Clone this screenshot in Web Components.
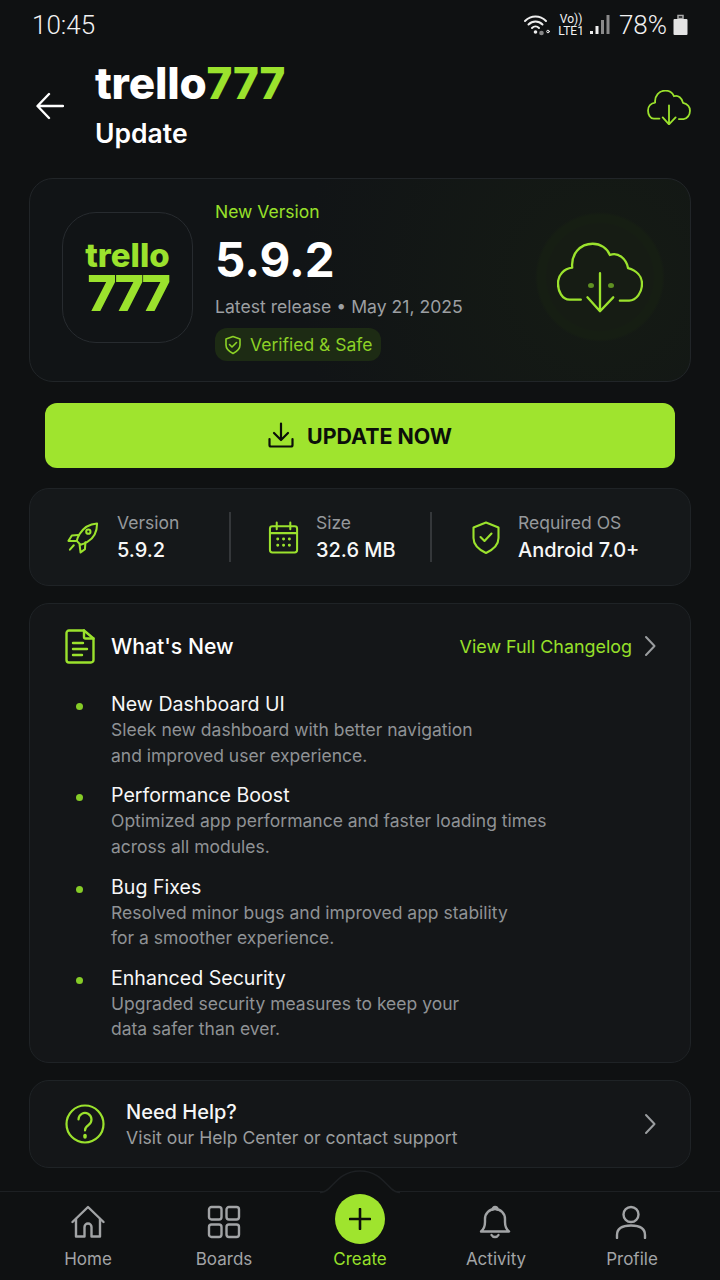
<!doctype html>
<html lang="en">
<head>
<meta charset="UTF-8">
<title>trello777 Update</title>
<style>
    html, body { margin: 0; background: #0f1112; }
    body {
        width: 720px; height: 1280px; overflow: hidden;
        display: flex; flex-direction: column;
        font-family: Inter, "Liberation Sans", sans-serif; color: #fff;
    }
    main { flex: 1; padding: 0 29px; display: flex; flex-direction: column; }
</style>
</head>
<body>
<status-bar></status-bar>
<app-header></app-header>
<main>
    <hero-card></hero-card>
    <update-button>UPDATE NOW</update-button>
    <stat-strip>
        <stat-item icon="rocket" label="Version" value="5.9.2" gap="50" style="width:201px;padding-left:37px"></stat-item>
        <stat-item icon="calendar" label="Size" value="32.6 MB" gap="48" style="width:201px;padding-left:37px"></stat-item>
        <stat-item icon="shield" label="Required OS" value="Android 7.0+" gap="48" style="flex:1;padding-left:38px"></stat-item>
    </stat-strip>
    <news-card>
        <news-item title="New Dashboard UI">Sleek new dashboard with better navigation<br>and improved user experience.</news-item>
        <news-item title="Performance Boost">Optimized app performance and faster loading times<br>across all modules.</news-item>
        <news-item title="Bug Fixes">Resolved minor bugs and improved app stability<br>for a smoother experience.</news-item>
        <news-item title="Enhanced Security">Upgraded security measures to keep your<br>data safer than ever.</news-item>
    </news-card>
    <help-card></help-card>
</main>
<bottom-nav>
    <nav-item icon="home" label="Home"></nav-item>
    <nav-item icon="boards" label="Boards"></nav-item>
    <nav-item icon="plus" label="Create" active></nav-item>
    <nav-item icon="bell" label="Activity"></nav-item>
    <nav-item icon="user" label="Profile"></nav-item>
</bottom-nav>
<script>
    const ICONS = {
        back: '<path d="M27 14H2M13 2 1.500 14 13 26"/>',
        cloud: '<path d="M72 173H38C15 173 3 147 3 124 3 98 21 79 46 76 42 35 70 4 108 4 132 4 152 18 160 38 185 28 210 50 215 78 240 85 257 102 257 125 257 151 240 175 218 176H190"/><path d="M130 93V208M92 166l38 42 40-42"/>',
        download: '<path d="M13 1.500v16M6 11l7 7 7-7"/><path d="M1.500 17v6a1.500 1.500 0 0 0 1.500 1.500h20a1.500 1.500 0 0 0 1.500-1.500v-6"/>',
        rocket: '<path d="M31 2c-8 .5-14 4-18 11-1.500 2.500-2.500 5-3 7l4 4c2-.5 4.500-1.500 7-3 7-4 10-10 10-19Z"/><path d="M11.500 14 5 14.500 1.500 20H9M19 21.500l-.5 7L14 32l-1-8"/><circle cx="22" cy="10.500" r="2.200"/><path d="m7 24.500-4 4.500"/>',
        calendar: '<rect x="2" y="5" width="28" height="27" rx="2.500"/><path d="M2 12h28M9 1v7M23 1v7"/><path d="M10 18h.1M16 18h.1M22 18h.1M10 24.500h.1M16 24.500h.1M22 24.500h.1" stroke-width="3"/>',
        shield: '<path d="M14.500 1.500 27 6.500V17c0 7-5 11.500-12.500 15C7 28.500 2 24 2 17V6.500Z"/><path d="m9 16 4 4 7-7.500"/>',
        shieldSmall: '<path d="M9 1.500 16 4v6c0 4-3 6.500-7 8.500-4-2-7-4.500-7-8.500V4Z"/><path d="m5.500 9.500 2.500 2.500 4.500-4.500"/>',
        doc: '<path d="M19 1.500H4A2.500 2.500 0 0 0 1.500 4v27A2.500 2.500 0 0 0 4 33.500h22a2.500 2.500 0 0 0 2.500-2.500V9.500Z"/><path d="M19 1.500V8a1.500 1.500 0 0 0 1.500 1.500h8"/><path d="M8 14h10M8 20h14M8 26h9"/>',
        chevron: '<path d="m2 2 8.500 9L2 20"/>',
        help: '<circle cx="20" cy="20" r="18.500"/><path d="M13.500 15.500a6.500 6.500 0 1 1 10 5.500c-2.300 1.500-3.500 2.800-3.500 5.500"/><path d="M20 31.500v1.500" stroke-linecap="round" stroke-width="3.500"/>',
        home: '<path d="M1.500 17 17 2l15.500 15"/><path d="M5 14v17.500h8.500V22a3.500 3.500 0 0 1 7 0v9.500H29V14"/>',
        boards: '<rect x="2" y="2" width="12.500" height="12.500" rx="2.500"/><rect x="19.500" y="2" width="12.500" height="12.500" rx="2.500"/><rect x="2" y="19.500" width="12.500" height="12.500" rx="2.500"/><rect x="19.500" y="19.500" width="12.500" height="12.500" rx="2.500"/>',
        plus: '<path d="M11 1v20M1 11h20"/>',
        bell: '<path d="M2 26.500c3-2.500 4-5 4-9.500v-3a10 10 0 0 1 20 0v3c0 4.500 1 7 4 9.500Z"/><path d="M13.500 4.500a2.500 2.500 0 0 1 5 0M12.500 30a4 4 0 0 0 7 0"/>',
        user: '<circle cx="16" cy="9.500" r="7.500"/><path d="M2 33v-3c0-6 5-9.500 14-9.500S30 24 30 30v3"/>'
    };
    const svg = (name, w, h, vw, vh, sw) =>
        `<svg width="${w}" height="${h}" viewBox="0 0 ${vw} ${vh}" fill="none" stroke="currentColor" stroke-width="${sw}" stroke-linecap="round" stroke-linejoin="round" aria-hidden="true">${ICONS[name]}</svg>`;

    // base class, every element just hands over its shadow markup
    class ShadowEl extends HTMLElement {
        constructor() {
            super();
            this.attachShadow({mode: 'open'});
        }
        connectedCallback() {
            this.shadowRoot.innerHTML = this.render();
        }
    }

    class StatusBar extends ShadowEl {
        render() {
            return `<style>
                :host { display:flex; align-items:center; height:50px; padding:0 32px; box-sizing:border-box;
                    font-family:Roboto,sans-serif; font-weight:300; font-size:26px; color:#f2f2f2; }
                .right { margin-left:auto; margin-right:-1px; display:flex; align-items:center; }
                .volte { font-size:12px; line-height:12px; font-weight:400; text-align:center; margin:0 5px 0 7px; }
                .pct { margin:0 6px 0 8px; }
            </style>
            <span>10:45</span>
            <div class="right">
                <svg width="28" height="22" viewBox="0 0 28 22" fill="none" stroke="#eee" stroke-width="2" stroke-linecap="round">
                    <path d="M2 7c6-6 15-6 21 0M5.500 10.500c4-4 10-4 14 0M9 14c2-2 5-2 7 0"/>
                    <circle cx="12.500" cy="18" r="1.800" fill="#eee" stroke="none"/><circle cx="18.500" cy="19" r="2.300" fill="#888" stroke="none"/><circle cx="25" cy="17.500" r="1.300" stroke-width="1"/>
                </svg>
                <div class="volte">Vo))<br>LTE1</div>
                <svg width="22" height="22" viewBox="0 0 22 22" fill="#eee">
                    <rect x="1" y="17" width="3" height="3"/><rect x="6.500" y="12" width="3" height="8"/>
                    <rect x="12" y="6" width="3" height="14" fill="#8a8a8a"/><rect x="17.500" y="1" width="3" height="19" fill="#8a8a8a"/>
                </svg>
                <span class="pct">78%</span>
                <svg width="16" height="22" viewBox="0 0 16 22">
                    <path d="M5 1.500h5v3H5z" fill="none" stroke="#aaa" stroke-width="1.500"/>
                    <path d="M1.500 5h12a1 1 0 0 1 1 1v14a1 1 0 0 1-1 1h-12a1 1 0 0 1-1-1V6a1 1 0 0 1 1-1z" fill="#e4e4e4"/>
                </svg>
            </div>`;
        }
    }

    class AppHeader extends ShadowEl {
        render() {
            return `<style>
                :host { display:flex; align-items:flex-start; height:128px; padding:0 29px 0 36px; box-sizing:border-box; }
                .back { color:#fff; margin-top:42px; width:59px; height:28px; flex:none; }
                .title { font-size:44px; line-height:50px; font-weight:800; margin-top:8px; letter-spacing:-.2px; }
                .title b { color:#9be22d; font-weight:800; }
                .sub { font-size:26.500px; line-height:30px; font-weight:600; margin-top:10px; }
                .cloud { margin-left:auto; margin-top:40px; color:#9be22d; }
            </style>
            <div class="back">${svg('back', 28, 28, 28, 28, 2.4)}</div>
            <div>
                <div class="title">trello<b>777</b></div>
                <div class="sub">Update</div>
            </div>
            <div class="cloud">${svg('cloud', 44, 35, 260, 212, 11)}</div>`;
        }
    }

    class HeroCard extends ShadowEl {
        render() {
            return `<style>
                :host { display:flex; height:204px; box-sizing:border-box; position:relative; border:1.500px solid #212528; border-radius:24px;
                    padding:33px 0 0 32px;
                    background:radial-gradient(circle 300px at 570px 100px, #151b14 0%, #111416 100%); }
                .logo { width:131px; height:131px; box-sizing:border-box; border:1.500px solid #272b2f; border-radius:34px; background:#111416;
                    color:#9be22d; display:flex; flex-direction:column; align-items:center; justify-content:center; flex:none; font-weight:800; }
                .logo span { font-size:33px; line-height:33px; margin-top:-2px; }
                .logo b { font-size:50px; line-height:42px; font-weight:800; letter-spacing:-3.200px; }
                .info { margin-left:22px; margin-top:-12px; }
                .new { color:#98e02a; font-size:17.500px; line-height:24px; }
                .ver { font-size:47.500px; line-height:58px; font-weight:700; margin-top:7px; }
                .rel { color:#9c9fa2; font-size:17.600px; line-height:24px; margin-top:6px; }
                .pill { display:inline-flex; align-items:center; gap:8px; height:33px; padding:0 9px; box-sizing:border-box; margin-top:9px;
                    border-radius:12px; background:#1d2b14; color:#8cd126; font-size:17.500px; }
                .glow { position:absolute; left:505px; top:33px; width:130px; height:130px; border-radius:50%;
                    background:radial-gradient(circle, #161c14 0 53px, #161e13 55px 62px, transparent 65px);
                    display:flex; align-items:center; justify-content:center; color:#9be22d; }
                .dot { position:absolute; width:6px; height:5px; border-radius:50%; background:#5f9022; top:71px; }
            </style>
            <div class="logo"><span>trello</span><b>777</b></div>
            <div class="info">
                <div class="new">New Version</div>
                <div class="ver">5.9.2</div>
                <div class="rel">Latest release • May 21, 2025</div>
                <div class="pill">${svg('shieldSmall', 18, 20, 18, 20, 1.6)}Verified &amp; Safe</div>
            </div>
            <div class="glow">${svg('cloud', 86, 71, 260, 212, 7)}<i class="dot" style="left:53px"></i><i class="dot" style="left:73px"></i></div>`;
        }
    }

    class UpdateButton extends ShadowEl {
        render() {
            return `<style>
                :host { display:flex; align-items:center; justify-content:center; gap:13px; height:65px; margin:21px 16px 20px;
                    border-radius:12px; background:#9fe42e; color:#0c0f0a; font-size:21.400px; font-weight:700; }
                svg { margin-top:-2px; }
            </style>${svg('download', 26, 26, 26, 26, 2.2)}<slot></slot>`;
        }
    }

    class StatStrip extends ShadowEl {
        render() {
            return `<style>
                :host { display:flex; height:98px; box-sizing:border-box; align-items:center; border:1.500px solid #1f2326; border-radius:20px;
                    background:#15181a; margin-bottom:17px; }
            </style><slot></slot>`;
        }
    }

    class StatItem extends ShadowEl {
        render() {
            const icon = this.getAttribute('icon');
            return `<style>
                :host { display:flex; align-items:center; height:50px; box-sizing:border-box; border-right:2px solid #34373a; }
                :host(:last-child) { border-right:none; }
                .ic { color:#9be22d; width:${this.getAttribute('gap')}px; flex:none; display:flex; }
                .texts { margin-top:2px; }
                .lab { color:#96999c; font-size:17.500px; line-height:25px; }
                .val { font-size:20px; line-height:31px; font-weight:500; color:#f7f7f7; }
            </style>
            <div class="ic">${svg(icon, 32, 33, icon === 'shield' ? 29 : 33, 33, 2.1)}</div>
            <div class="texts"><div class="lab">${this.getAttribute('label')}</div><div class="val">${this.getAttribute('value')}</div></div>`;
        }
    }

    class NewsCard extends ShadowEl {
        render() {
            return `<style>
                :host { display:block; height:460px; box-sizing:border-box; border:1.500px solid #1f2326; border-radius:20px;
                    background:#141618; padding:24px 34px 0 35px; margin-bottom:17px; }
                .head { display:flex; align-items:center; height:36px; margin-bottom:27px; }
                .ic { color:#9be22d; width:46px; flex:none; display:flex; }
                h2 { font-size:21.200px; font-weight:500; margin:0; }
                a { margin-left:auto; color:#98e02a; font-size:17.900px; margin-top:1px; }
                .ch { color:#9a9d9f; margin-left:12px; display:flex; }
            </style>
            <div class="head">
                <div class="ic">${svg('doc', 30, 35, 30, 35, 2.4)}</div>
                <h2>What's New</h2>
                <a>View Full Changelog</a>
                <div class="ch">${svg('chevron', 12, 22, 12, 22, 2)}</div>
            </div>
            <slot></slot>`;
        }
    }

    class NewsItem extends ShadowEl {
        render() {
            return `<style>
                :host { display:flex; height:91.300px; }
                .mark { width:46px; flex:none; padding:12px 0 0 11px; box-sizing:border-box; }
                .mark i { display:block; width:7px; height:7px; border-radius:50%; background:#86cc27; }
                .t { font-size:19.600px; line-height:26px; font-weight:400; color:#f7f7f7; }
                .d { font-size:17.500px; line-height:25.500px; color:#8f9295; }
            </style>
            <div class="mark"><i></i></div>
            <div><div class="t">${this.getAttribute('title')}</div><div class="d"><slot></slot></div></div>`;
        }
    }

    class HelpCard extends ShadowEl {
        render() {
            return `<style>
                :host { display:flex; align-items:center; height:88px; box-sizing:border-box; border:1.500px solid #1f2326; border-radius:20px;
                    background:#141618; padding:0 34px 0 35px; }
                .ic { color:#9be22d; width:61px; flex:none; display:flex; }
                .texts { margin-top:2px; }
                .t { font-size:20px; line-height:26px; font-weight:500; color:#f7f7f7; }
                .d { font-size:17.600px; line-height:26px; color:#9a9d9f; }
                .ch { margin-left:auto; color:#9a9d9f; display:flex; }
            </style>
            <div class="ic">${svg('help', 40, 40, 40, 40, 2.2)}</div>
            <div class="texts"><div class="t">Need Help?</div><div class="d">Visit our Help Center or contact support</div></div>
            <div class="ch">${svg('chevron', 12, 22, 12, 22, 2)}</div>`;
        }
    }

    class BottomNav extends ShadowEl {
        render() {
            return `<style>
                :host { display:flex; height:89px; box-sizing:border-box; position:relative; border-top:1.500px solid #1d2023; padding:0 20px; background:#0f1112; }
                .notch { position:absolute; left:320px; top:-22px; }
            </style>
            <svg class="notch" width="80" height="24" viewBox="0 0 80 24" fill="none">
                <path d="M0 22.500h1C12 22.500 16 1 40 1s28 21.500 39 21.500h1V24H0Z" fill="#0f1112"/>
                <path d="M0 22.500h1C12 22.500 16 1 40 1s28 21.500 39 21.500h1" stroke="#1d2023" stroke-width="1.500"/>
            </svg>
            <slot></slot>`;
        }
    }

    class NavItem extends ShadowEl {
        render() {
            const icon = this.getAttribute('icon');
            const active = this.hasAttribute('active');
            const graphic = active
                ? `<div class="fab">${svg('plus', 22, 22, 22, 22, 2.6)}</div>`
                : svg(icon, 34, 34, 34, 34, 2.4);
            return `<style>
                :host { flex:1; display:flex; flex-direction:column; align-items:center; color:#a2a4a6; font-size:17px; position:relative; z-index:1; }
                :host([active]) { color:#98e02a; }
                .g { height:52px; display:flex; align-items:flex-start; padding-top:13px; box-sizing:border-box; margin-bottom:3px; }
                .fab { width:50px; height:50px; border-radius:50%; background:#9fe42e; color:#0c0f0a; display:flex; align-items:center; justify-content:center; margin-top:-11px; }
                .lab { line-height:24px; }
            </style>
            <div class="g">${graphic}</div><div class="lab">${this.getAttribute('label')}</div>`;
        }
    }

    customElements.define('status-bar', StatusBar);
    customElements.define('app-header', AppHeader);
    customElements.define('hero-card', HeroCard);
    customElements.define('update-button', UpdateButton);
    customElements.define('stat-strip', StatStrip);
    customElements.define('stat-item', StatItem);
    customElements.define('news-card', NewsCard);
    customElements.define('news-item', NewsItem);
    customElements.define('help-card', HelpCard);
    customElements.define('bottom-nav', BottomNav);
    customElements.define('nav-item', NavItem);
</script>
</body>
</html>
